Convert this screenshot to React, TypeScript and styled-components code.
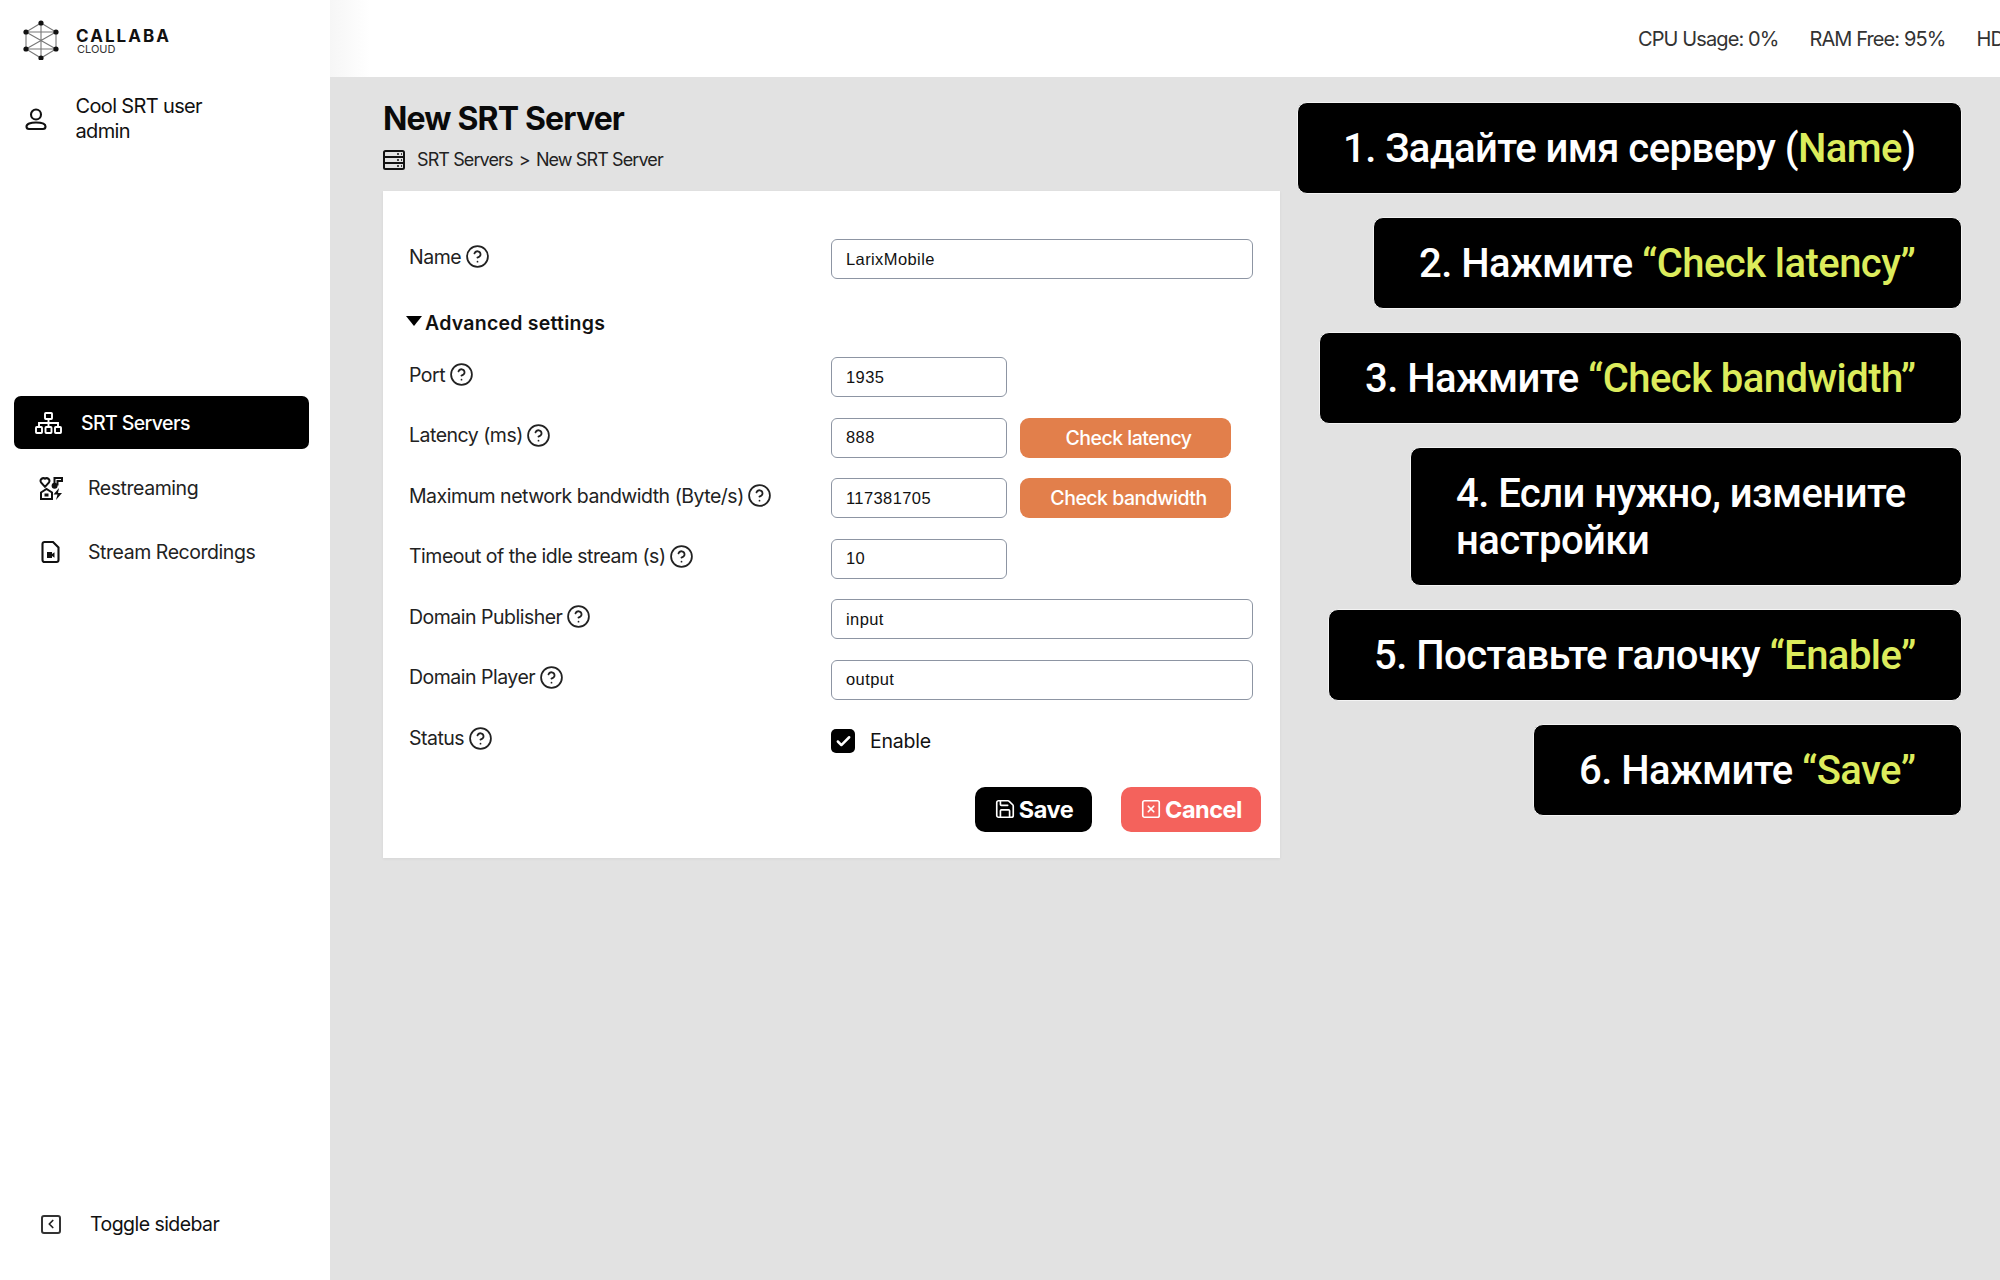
import React from "react";
import styled, { createGlobalStyle } from "styled-components";
import { CircleHelp, Save, SquareX, Check, ChevronLeft } from "lucide-react";

const Global = createGlobalStyle`
  html, body { margin: 0; padding: 0; background: #e2e2e2; }
  * { box-sizing: border-box; }
`;

const Page = styled.div`
  position: relative;
  width: 2000px;
  height: 1280px;
  overflow: hidden;
  display: grid;
  grid-template-columns: 330px 1fr;
  font-family: Inter, "Liberation Sans", sans-serif;
  color: #111;
  background: #e2e2e2;
`;

const Sidebar = styled.aside`
  background: #fff;
  display: flex;
  flex-direction: column;
  padding: 20px 0 44px;
`;

const Brand = styled.div`
  display: flex;
  align-items: center;
  gap: 17px;
  padding-left: 23px;
  height: 40px;
`;

const BrandText = styled.div`
  display: flex;
  flex-direction: column;
  margin-top: 2px;
`;

const BrandName = styled.span`
  font-size: 17px;
  line-height: 15px;
  font-weight: 700;
  letter-spacing: 2.05px;
  color: #111;
`;

const BrandSub = styled.span`
  font-size: 11px;
  line-height: 10px;
  color: #333;
  padding-left: 1px;
`;

const UserBlock = styled.div`
  display: flex;
  align-items: center;
  gap: 27.5px;
  padding-left: 24px;
  margin-top: 34px;
  font-size: 20px;
  line-height: 24.5px;
  letter-spacing: -0.65px;
`;

const Nav = styled.nav`
  display: flex;
  flex-direction: column;
  margin-top: 253px;
  padding: 0 21px 0 14px;
`;

const NavItem = styled.div<{ $active?: boolean }>`
  display: flex;
  align-items: center;
  height: 53px;
  gap: ${(p) => (p.$active ? "19px" : "25px")};
  padding-left: ${(p) => (p.$active ? "21px" : "25px")};
  margin-bottom: ${(p) => (p.$active ? "12px" : "11.5px")};
  border-radius: 7px;
  background: ${(p) => (p.$active ? "#000" : "transparent")};
  color: ${(p) => (p.$active ? "#fff" : "#222")};
  font-size: 19.5px;
  letter-spacing: ${(p) => (p.$active ? "-0.6px" : "-0.45px")};
  font-weight: ${(p) => (p.$active ? 500 : 400)};
`;

const ToggleRow = styled.div`
  margin-top: auto;
  display: flex;
  align-items: center;
  gap: 29px;
  padding-left: 41px;
  font-size: 19.5px;
  letter-spacing: -0.55px;
`;

const ToggleBox = styled.span`
  width: 20px;
  height: 19px;
  border: 2px solid #333;
  border-radius: 3px;
  display: inline-flex;
  align-items: center;
  justify-content: center;
  color: #222;
`;

const Main = styled.main`
  display: flex;
  flex-direction: column;
  min-width: 0;
`;

const TopBar = styled.header`
  height: 77px;
  background: linear-gradient(90deg, #f6f6f6 0, #fff 40px);
  display: flex;
  align-items: center;
  gap: 31px;
  overflow: hidden;
  font-size: 20px;
  letter-spacing: -0.9px;
  color: #333;
  padding-left: 1308px;
  white-space: nowrap;
`;

const Stat = styled.span`
  flex: none;
`;

const Content = styled.div`
  padding: 22px 0 0 53px;
`;

const Title = styled.h1`
  margin: 0;
  font-size: 32px;
  line-height: 40px;
  font-weight: 700;
  letter-spacing: -0.85px;
  color: #0a0a0a;
`;

const Crumbs = styled.div`
  display: flex;
  align-items: center;
  gap: 12px;
  margin-top: 9px;
  font-size: 18px;
  line-height: 24px;
  letter-spacing: -0.9px;
  color: #222;
`;

const CrumbSep = styled.span`
  margin: 0 2px;
`;

const Card = styled.section`
  width: 897px;
  height: 667px;
  margin-top: 19px;
  background: #fff;
  padding: 48px 26px 0;
  box-shadow: 0 1px 3px rgba(0, 0, 0, 0.06);
`;

const Row = styled.div`
  display: grid;
  grid-template-columns: 422px 1fr;
  align-items: center;
  height: 40px;
  margin-bottom: 20.6px;
`;

const Label = styled.label`
  display: flex;
  align-items: center;
  gap: 3.5px;
  font-size: 19.5px;
  letter-spacing: -0.5px;
  color: #222;
  margin-top: -5px;
`;

const HelpIcon = styled(CircleHelp)`
  width: 25px;
  height: 25px;
  color: #222;
  stroke-width: 1.7;
`;

const Controls = styled.div`
  display: flex;
  align-items: center;
  gap: 13px;
`;

const Field = styled.div<{ $short?: boolean }>`
  width: ${(p) => (p.$short ? "176px" : "422px")};
  height: 40px;
  border: 1.5px solid #8d95a3;
  border-radius: 6px;
  display: flex;
  align-items: center;
  padding-left: 14px;
  font-family: "Liberation Sans", Arial, sans-serif;
  font-size: 16.5px;
  letter-spacing: 0.4px;
  color: #111;
  background: #fff;
`;

const CheckButton = styled.button`
  width: 211px;
  height: 40px;
  border: 0;
  border-radius: 9px;
  padding: 0 0 0 6px;
  background: #e27f4b;
  color: #fff;
  font-family: inherit;
  font-size: 19.5px;
  font-weight: 500;
  letter-spacing: -0.5px;
`;

const Advanced = styled.div`
  display: flex;
  align-items: center;
  gap: 3px;
  height: 24px;
  margin: 32px 0 22px -3px;
  font-size: 19.5px;
  font-weight: 600;
  letter-spacing: 0.25px;
`;

const Caret = styled.span`
  width: 0;
  height: 0;
  margin-top: -4px;
  border-left: 8px solid transparent;
  border-right: 8px solid transparent;
  border-top: 10px solid #000;
`;

const CheckWrap = styled.div`
  display: flex;
  align-items: center;
  gap: 15px;
  font-size: 19.5px;
  letter-spacing: -0.2px;
  margin-top: 1px;
`;

const CheckBox = styled.span`
  width: 24px;
  height: 24px;
  background: #000;
  border-radius: 5px;
  color: #fff;
  display: inline-flex;
  align-items: center;
  justify-content: center;
`;

const Actions = styled.div`
  display: flex;
  justify-content: flex-end;
  gap: 29px;
  margin: 26px -7px 0 0;
`;

const ActionButton = styled.button<{ $tone: "dark" | "red" }>`
  height: 45px;
  width: ${(p) => (p.$tone === "dark" ? "117px" : "140px")};
  border: 0;
  border-radius: 10px;
  padding: 0;
  background: ${(p) => (p.$tone === "dark" ? "#000" : "#f4625c")};
  color: #fff;
  display: inline-flex;
  align-items: center;
  justify-content: center;
  gap: 3px;
  font-family: inherit;
  font-size: 23.5px;
  font-weight: 700;
  letter-spacing: -0.5px;
`;

const Callouts = styled.div`
  position: absolute;
  top: 102px;
  right: 38px;
  display: flex;
  flex-direction: column;
  align-items: flex-end;
  gap: 23px;
`;

const Callout = styled.div<{ $w: number }>`
  width: ${(p) => p.$w}px;
  background: #000;
  border-radius: 10px;
  border: 1px solid #f4f4f4;
  padding: 21.5px 30px 21.5px 45px;
  color: #fff;
  font-family: Roboto, "Noto Sans", sans-serif;
  font-size: 40px;
  font-weight: 500;
  line-height: 47px;
  letter-spacing: -0.55px;
  text-align: left;
`;

const Hl = styled.span`
  color: #dcec5c;
`;

const Logo = () => (
  <svg width="36" height="40" viewBox="0 0 36 40" fill="none">
    <g stroke="#777" strokeWidth="1.1">
      <path d="M18 3 33 12v17l-15 9-15-9V12z" />
      <path d="M18 3v35M3 12l30 17M33 12 3 29M3 12h30M3 29h30" />
    </g>
    <g fill="#111">
      <circle cx="18" cy="3" r="2.6" />
      <circle cx="33" cy="12" r="2.6" />
      <circle cx="33" cy="29" r="2.6" />
      <circle cx="18" cy="38" r="2.6" />
      <circle cx="3" cy="29" r="2.6" />
      <circle cx="3" cy="12" r="2.6" />
    </g>
  </svg>
);

const UserIcon = () => (
  <svg width="24" height="24" viewBox="0 0 24 24" fill="none" stroke="#111" strokeWidth="2.1">
    <circle cx="12" cy="7.5" r="5" />
    <path d="M5 22h14a2.5 2.5 0 0 0 2.5-2.5c0-2.5-4-4-9.5-4s-9.5 1.5-9.5 4A2.5 2.5 0 0 0 5 22z" />
  </svg>
);

const NetIcon = () => (
  <svg width="27" height="22" viewBox="0 0 27 22" fill="none" stroke="#fff" strokeWidth="1.9">
    <rect x="10" y="1" width="7" height="6" rx="0.8" />
    <path d="M13.5 7v8M4 15v-4h19v4" />
    <rect x="1" y="15" width="6" height="6" rx="0.8" />
    <rect x="10.5" y="15" width="6" height="6" rx="0.8" />
    <rect x="20" y="15" width="6" height="6" rx="0.8" />
  </svg>
);

const RestreamIcon = () => (
  <svg width="24" height="24" viewBox="0 0 24 24" fill="none" stroke="#111" strokeWidth="2">
    <path d="M6 10.8 2 6.3a2.7 2.7 0 0 1 4-3.5 2.7 2.7 0 0 1 4 3.5z" />
    <path d="M15.5 9.5V2h7.5v3h-4.5v4.5" />
    <circle cx="15.6" cy="9.7" r="2" fill="#111" />
    <path d="M2 16.5l5.5-3.5 5.5 3.5V23H2z" />
    <rect x="5.5" y="17.5" width="4" height="3" fill="#111" stroke="none" />
    <path d="M20 12l-5.5 6.5h4L17 24l6-7h-4z" fill="#111" stroke="none" />
  </svg>
);

const VideoFileIcon = () => (
  <svg width="24" height="24" viewBox="0 0 24 24" fill="none">
    <path d="M5.5 2h8.5l5.5 5.5V20a2 2 0 0 1-2 2h-12a2 2 0 0 1-2-2V4a2 2 0 0 1 2-2z" stroke="#111" strokeWidth="2.1" />
    <path d="M8 12h5v2l2.5-1.8v5.6L13 16v2H8z" fill="#111" />
  </svg>
);

const ServerIcon = () => (
  <svg width="22" height="20" viewBox="0 0 22 20" fill="none" stroke="#111" strokeWidth="2">
    <rect x="1" y="1" width="20" height="18" rx="1.5" />
    <path d="M1 7h20M1 13h20" />
    <path d="M14 4h2M18 4h1M14 10h2M18 10h1M14 16h2M18 16h1" strokeWidth="1.6" />
  </svg>
);

const rows = [
  { label: "Port", value: "1935", short: true },
  { label: "Latency (ms)", value: "888", short: true, action: "Check latency" },
  { label: "Maximum network bandwidth (Byte/s)", value: "117381705", short: true, action: "Check bandwidth" },
  { label: "Timeout of the idle stream (s)", value: "10", short: true },
  { label: "Domain Publisher", value: "input" },
  { label: "Domain Player", value: "output" },
];

export default function App() {
  return (
    <Page>
      <Global />
      <Sidebar>
        <Brand>
          <Logo />
          <BrandText>
            <BrandName>CALLABA</BrandName>
            <BrandSub>CLOUD</BrandSub>
          </BrandText>
        </Brand>
        <UserBlock>
          <UserIcon />
          <div>
            Cool SRT user
            <br />
            admin
          </div>
        </UserBlock>
        <Nav>
          <NavItem $active>
            <NetIcon />
            SRT Servers
          </NavItem>
          <NavItem>
            <RestreamIcon />
            Restreaming
          </NavItem>
          <NavItem>
            <VideoFileIcon />
            Stream Recordings
          </NavItem>
        </Nav>
        <ToggleRow>
          <ToggleBox>
            <ChevronLeft size={14} strokeWidth={3} />
          </ToggleBox>
          Toggle sidebar
        </ToggleRow>
      </Sidebar>
      <Main>
        <TopBar>
          <Stat>CPU Usage: 0%</Stat>
          <Stat>RAM Free: 95%</Stat>
          <Stat>HDD Free: 80%</Stat>
        </TopBar>
        <Content>
          <Title>New SRT Server</Title>
          <Crumbs>
            <ServerIcon />
            <span>
              SRT Servers <CrumbSep>&gt;</CrumbSep> New SRT Server
            </span>
          </Crumbs>
          <Card>
            <Row>
              <Label>
                Name <HelpIcon />
              </Label>
              <Field>LarixMobile</Field>
            </Row>
            <Advanced>
              <Caret />
              Advanced settings
            </Advanced>
            {rows.map((r) => (
              <Row key={r.label}>
                <Label>
                  {r.label} <HelpIcon />
                </Label>
                <Controls>
                  <Field $short={r.short}>{r.value}</Field>
                  {r.action && <CheckButton>{r.action}</CheckButton>}
                </Controls>
              </Row>
            ))}
            <Row>
              <Label>
                Status <HelpIcon />
              </Label>
              <CheckWrap>
                <CheckBox>
                  <Check size={17} strokeWidth={3.5} />
                </CheckBox>
                Enable
              </CheckWrap>
            </Row>
            <Actions>
              <ActionButton $tone="dark">
                <Save size={22} strokeWidth={1.8} />
                Save
              </ActionButton>
              <ActionButton $tone="red">
                <SquareX size={22} strokeWidth={1.8} />
                Cancel
              </ActionButton>
            </Actions>
          </Card>
        </Content>
      </Main>
      <Callouts>
        <Callout $w={665}>
          1. Задайте имя серверу (<Hl>Name</Hl>)
        </Callout>
        <Callout $w={589}>
          2. Нажмите <Hl>“Check latency”</Hl>
        </Callout>
        <Callout $w={643}>
          3. Нажмите <Hl>“Check bandwidth”</Hl>
        </Callout>
        <Callout $w={552}>4. Если нужно, измените настройки</Callout>
        <Callout $w={634}>
          5. Поставьте галочку <Hl>“Enable”</Hl>
        </Callout>
        <Callout $w={429}>
          6. Нажмите <Hl>“Save”</Hl>
        </Callout>
      </Callouts>
    </Page>
  );
}
